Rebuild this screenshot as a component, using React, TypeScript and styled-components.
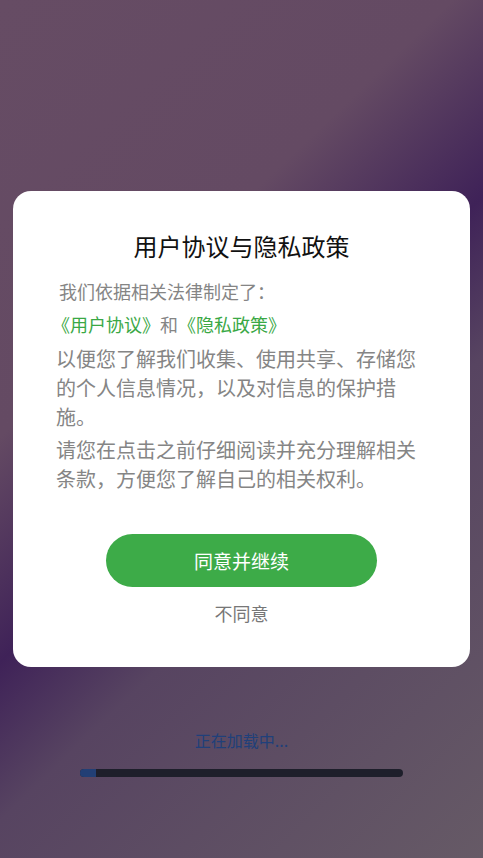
import React from 'react'
import styled, { createGlobalStyle } from 'styled-components'

const GlobalStyle = createGlobalStyle`
  html, body {
    margin: 0;
    padding: 0;
    height: 100%;
  }
  body {
    font-family: "Noto Sans CJK SC", "Noto Sans", sans-serif;
    overflow: hidden;
  }
`

const Splash = styled.div`
  height: 100vh;
  display: flex;
  flex-direction: column;
  align-items: center;
  justify-content: flex-end;
  padding-bottom: 81px;
  box-sizing: border-box;
  background: linear-gradient(
    136deg,
    #664c64 0%,
    #644a63 33%,
    #3f2258 50%,
    #574461 62%,
    #665a66 100%
  );
`

const LoadingText = styled.div`
  color: #20407a;
  font-size: 16px;
  line-height: 20px;
  margin-bottom: 19px;
`

const ProgressTrack = styled.div`
  width: 323px;
  height: 8px;
  border-radius: 4px;
  background: #1e1f2b;
  overflow: hidden;
`

const ProgressFill = styled.div`
  height: 100%;
  background: #223f75;
`

const Overlay = styled.div`
  position: fixed;
  inset: 0;
  display: flex;
  align-items: center;
  justify-content: center;
`

const Card = styled.div`
  width: 457px;
  height: 476px;
  box-sizing: border-box;
  background: #fff;
  border-radius: 18px;
  padding: 38px 43px 0;
  display: flex;
  flex-direction: column;
`

const Title = styled.h1`
  margin: 0;
  font-size: 24px;
  line-height: 34px;
  font-weight: 400;
  color: #111;
  text-align: center;
`

const Intro = styled.p`
  margin: 15px 0 0 3px;
  font-size: 18px;
  line-height: 26px;
  color: #858585;
`

const Links = styled.p`
  margin: 7px 0 0 -4px;
  font-size: 18px;
  line-height: 26px;
  color: #858585;
`

const Link = styled.span`
  color: #3aa845;
`

const Body = styled.p<{ $first?: boolean }>`
  margin: ${(p) => (p.$first ? '7px' : '4px')} 0 0;
  font-size: 20px;
  line-height: 29px;
  color: #858585;
`

const AgreeButton = styled.button`
  align-self: center;
  margin-top: 41px;
  width: 271px;
  height: 53px;
  border: none;
  border-radius: 27px;
  background: #3dab48;
  color: #fff;
  font-family: inherit;
  font-size: 19px;
`

const Decline = styled.button`
  align-self: center;
  margin-top: 13px;
  border: none;
  background: none;
  padding: 0;
  font-family: inherit;
  font-size: 18px;
  line-height: 26px;
  color: #777;
`

export default function App() {
  const progress = 5

  return (
    <>
      <GlobalStyle />
      <Splash>
        <LoadingText>{'正在加载中...'}</LoadingText>
        <ProgressTrack>
          <ProgressFill style={{ width: `${progress}%` }} />
        </ProgressTrack>
      </Splash>

      <Overlay>
        <Card>
          <Title>{'用户协议与隐私政策'}</Title>
          <Intro>{'我们依据相关法律制定了：'}</Intro>
          <Links>
            <Link>{'《用户协议》'}</Link>
            {'和'}
            <Link>{'《隐私政策》'}</Link>
          </Links>
          <Body $first>
            {'以便您了解我们收集、使用共享、存储您的个人信息情况，以及对信息的保护措施。'}
          </Body>
          <Body>{'请您在点击之前仔细阅读并充分理解相关条款，方便您了解自己的相关权利。'}</Body>
          <AgreeButton>{'同意并继续'}</AgreeButton>
          <Decline>{'不同意'}</Decline>
        </Card>
      </Overlay>
    </>
  )
}
